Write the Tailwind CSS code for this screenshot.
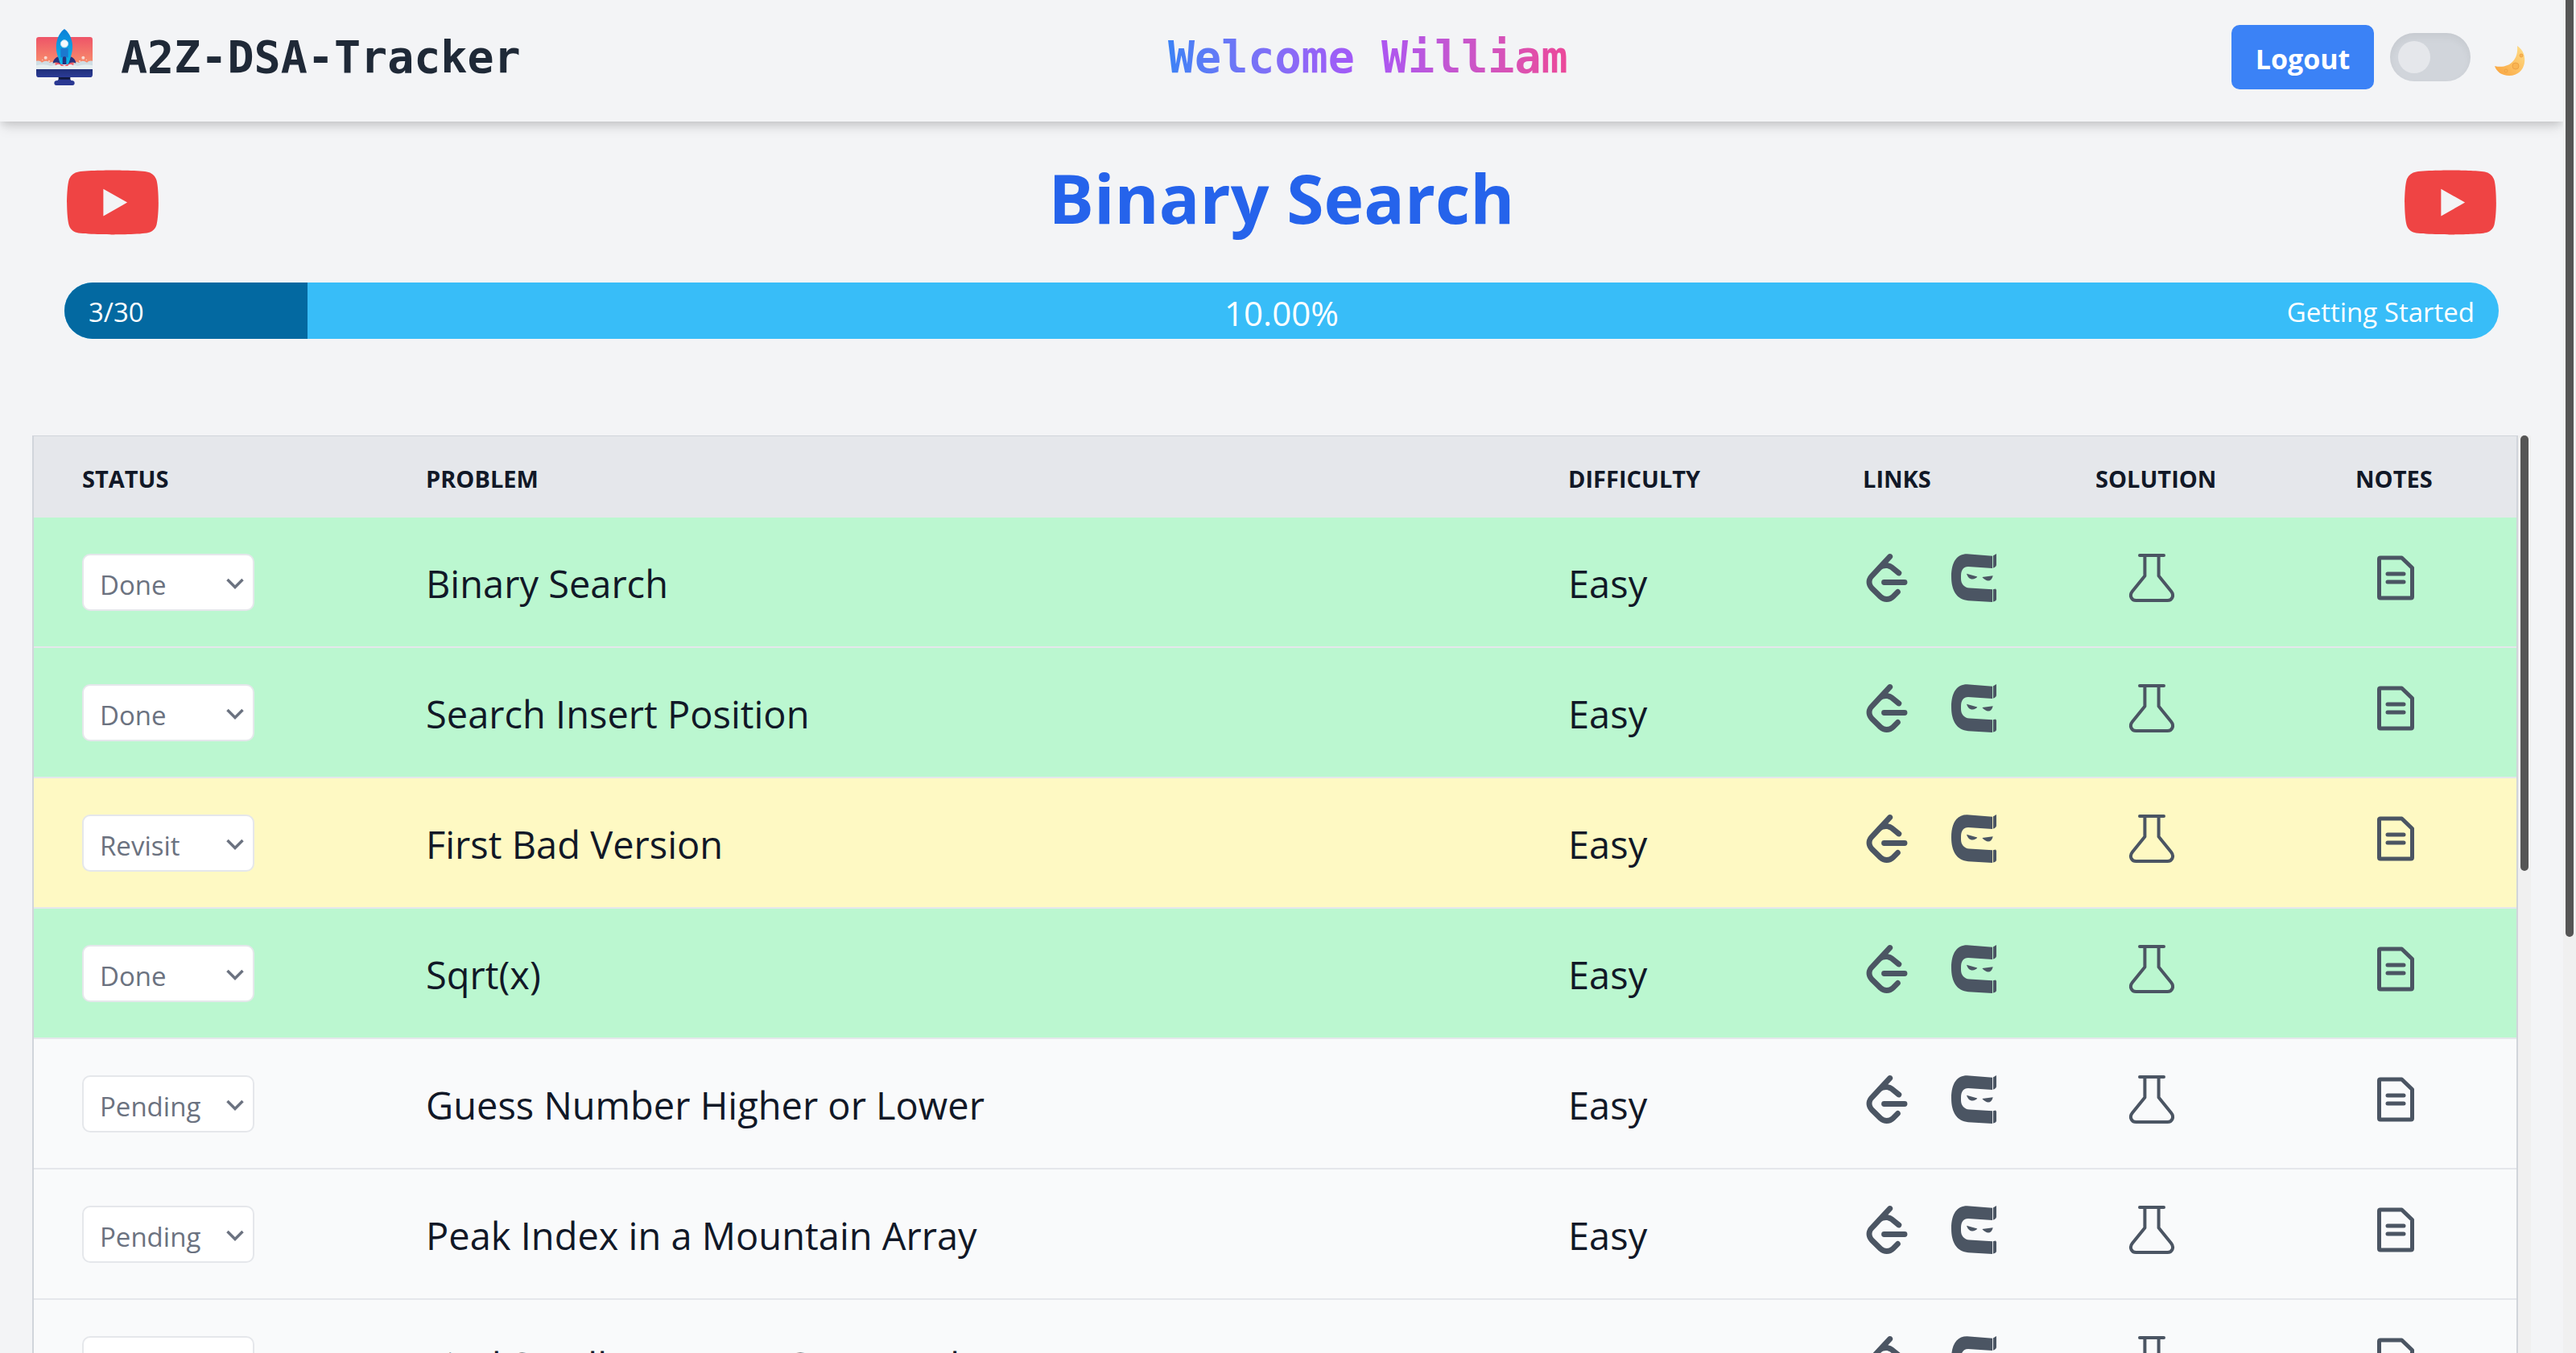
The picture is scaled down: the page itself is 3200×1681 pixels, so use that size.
<!DOCTYPE html>
<html lang="en">
<head>
<meta charset="utf-8">
<title>A2Z-DSA-Tracker</title>
<script src="https://cdn.jsdelivr.net/npm/@tailwindcss/browser@4"></script>
</head>
<body class="bg-[#f3f4f6] font-['Open_Sans',sans-serif] text-[#111827]">
<svg class="hidden" aria-hidden="true">
  <symbol id="youtube" viewBox="0 0 576 512"><path fill="currentColor" d="M549.655 124.083c-6.281-23.65-24.787-42.276-48.284-48.597C458.781 64 288 64 288 64S117.22 64 74.629 75.486c-23.497 6.322-42.003 24.947-48.284 48.597-11.412 42.867-11.412 132.305-11.412 132.305s0 89.438 11.412 132.305c6.281 23.65 24.787 41.5 48.284 47.821C117.22 448 288 448 288 448s170.78 0 213.371-11.486c23.497-6.321 42.003-24.171 48.284-47.821 11.412-42.867 11.412-132.305 11.412-132.305s0-89.438-11.412-132.305zm-317.51 213.508V175.185l142.739 81.205-142.739 81.201z"/></symbol>
  <symbol id="leetcode" viewBox="0 0 24 24"><path fill="currentColor" d="M13.483 0a1.374 1.374 0 0 0-.961.438L7.116 6.226l-3.854 4.126a5.266 5.266 0 0 0-1.209 2.104 5.35 5.35 0 0 0-.125.513 5.527 5.527 0 0 0 .062 2.362 5.83 5.83 0 0 0 .349 1.017 5.938 5.938 0 0 0 1.271 1.818l4.277 4.193.039.038c2.248 2.165 5.852 2.133 8.063-.074l2.396-2.392c.54-.54.54-1.414.003-1.955a1.378 1.378 0 0 0-1.951-.003l-2.396 2.392a3.021 3.021 0 0 1-4.205.038l-.02-.019-4.276-4.193c-.652-.64-.972-1.469-.948-2.263a2.68 2.68 0 0 1 .066-.523 2.545 2.545 0 0 1 .619-1.164L9.13 8.114c1.058-1.134 3.204-1.27 4.43-.278l3.501 2.831c.593.48 1.461.387 1.94-.207a1.384 1.384 0 0 0-.207-1.943l-3.5-2.831c-.8-.647-1.766-1.045-2.774-1.202l2.015-2.158A1.384 1.384 0 0 0 13.483 0zm-2.866 12.815a1.38 1.38 0 0 0-1.38 1.382 1.38 1.38 0 0 0 1.38 1.382H20.79a1.38 1.38 0 0 0 1.38-1.382 1.38 1.38 0 0 0-1.38-1.382z"/></symbol>
  <symbol id="ninja" viewBox="0 0 60 60"><g fill="currentColor"><path d="M21.500 0.300L53 2.700V18L23 16C17 16 14 20.500 14 27V31C14 37.500 18 42 24.500 42.500L53 44.300V60L23 58.200C9 57 2 46 2 28.500C2 10 9 0.300 21.500 0.300Z"/><path d="M53.900 2.600L58 0V13.500C58 15.500 56.500 17 53.900 17.700ZM53.900 44.200L57 43.500L58 45V56.500C58 58 56.500 59 53.900 59.700Z"/><path d="M21 24.700L34.300 28.600C32 32 24 34.500 21 24.700ZM40.300 29L53.700 27.200C52 35 46 35.500 40.300 29Z"/></g></symbol>
  <symbol id="flask" viewBox="0 0 60 60"><path fill="none" stroke="currentColor" stroke-width="4" stroke-linecap="round" stroke-linejoin="round" d="M15 2H45M21.400 2V27.500L6 46.500C1.500 52 5 58 10.500 58H49.500C55 58 58.500 52 54 46.500L38.600 27.500V2"/></symbol>
  <symbol id="doc" viewBox="0 0 60 60"><path fill="none" stroke="currentColor" stroke-width="5" stroke-linecap="round" stroke-linejoin="round" d="M11 5H37.500L50.500 17.500V53.500Q50.500 55 49 55H11Q9.500 55 9.500 53.500V6.500Q9.500 5 11 5ZM20 25H40M20 35H40"/></symbol>
  <symbol id="chevron" viewBox="0 0 24 16"><path fill="none" stroke="currentColor" stroke-width="3.500" d="M2.500 3L12 12.500L21.500 3"/></symbol>
</svg>

<div class="flex h-screen overflow-hidden">
  <div class="min-w-0 flex-1">
    <header class="flex h-[151px] items-start justify-between pt-[31px] pr-[42px] pl-[45px] shadow-[0_10px_15px_-3px_rgba(0,0,0,0.1),0_4px_10px_-1px_rgba(0,0,0,0.12)]">
      <a href="#" class="flex h-20 items-center gap-[35px]">
        <svg class="size-[70px]" viewBox="15 18 210 210" aria-hidden="true">
          <defs>
            <linearGradient id="sky" x1="0" y1="0" x2="0" y2="1"><stop offset="0" stop-color="#ee5468"/><stop offset="1" stop-color="#fa9a6c"/></linearGradient>
            <linearGradient id="base" x1="0" y1="0" x2="0" y2="1"><stop offset="0" stop-color="#20307a"/><stop offset="1" stop-color="#2b3b96"/></linearGradient>
            <linearGradient id="hull" x1="0" y1="0" x2="0" y2="1"><stop offset="0" stop-color="#0d80d8"/><stop offset="1" stop-color="#09b8ea"/></linearGradient>
          </defs>
          <path fill="url(#sky)" d="M15 168V58Q15 48 25 48H215Q225 48 225 58V168Z"/>
          <path fill="#cfdde3" d="M15 168V137Q30 134 36 143Q52 131 66 144Q76 136 90 152H150Q162 136 174 144Q188 131 204 143Q212 134 225 137V168Z"/>
          <path fill="#e6eef0" d="M15 168V154Q45 146 70 156Q120 140 170 156Q195 146 225 154V168Z"/>
          <g fill="#f8d9d2"><circle cx="50" cy="125" r="6"/><circle cx="190" cy="125" r="6"/><circle cx="63" cy="138" r="3"/><circle cx="177" cy="138" r="3"/><circle cx="38" cy="133" r="2"/><circle cx="202" cy="133" r="2"/></g>
          <path fill="#ee5b6c" d="M86 154Q84 140 102 144L120 156L138 144Q156 140 154 154Q140 144 132 156H108Q100 144 86 154Z"/>
          <path fill="#28307c" d="M97 121Q80 126 77 146Q93 138 106 149ZM143 121Q160 126 163 146Q147 138 134 149Z"/>
          <path fill="url(#hull)" d="M120 18C95 36 80 78 97 124Q101 140 106 149H134Q139 140 143 124C160 78 145 36 120 18Z"/>
          <path fill="#1b79cf" d="M106 90H134V124H106Z"/>
          <circle cx="120" cy="73" r="14" fill="#f4f9fc" stroke="#a9d8f1" stroke-width="3"/>
          <path fill="#28307c" d="M113 150V128Q113 121 120 121Q127 121 127 128V150Z"/>
          <path fill="url(#base)" d="M15 168H225V188Q225 198 215 198H25Q15 198 15 188Z"/>
          <path fill="#10193f" d="M98 198H142V212H98Z"/>
          <path fill="#2a3892" d="M98 206H142Q144 211 152 211Q158 213 158 219Q158 228 150 228H90Q82 228 82 219Q82 213 88 211Q96 211 98 206Z"/>
        </svg>
        <span class="font-['DejaVu_Sans_Mono',monospace] text-[55px] leading-[60px] font-bold text-[#1f2937]">A2Z-DSA-Tracker</span>
      </a>
      <div class="mr-5 flex h-20 items-center">
        <span class="bg-linear-to-r from-[#3b82f6] via-[#a855f7] to-[#ec4899] bg-clip-text font-['DejaVu_Sans_Mono',monospace] text-[55px] leading-[60px] font-bold text-transparent">Welcome William</span>
      </div>
      <div class="flex h-20 items-center">
        <button class="h-20 w-[177px] rounded-[10px] bg-[#3b82f6] pt-1 text-[34px] font-bold text-white">Logout</button>
        <label class="ml-5 flex items-center gap-[30px]">
          <span class="relative flex h-[60px] w-[100px] items-center rounded-full bg-[#d1d5db] px-[10px] shadow-[inset_0_5px_10px_0_rgba(0,0,0,0.05)]">
            <input type="checkbox" aria-label="Dark mode" class="peer absolute inset-0 appearance-none">
            <span class="size-10 rounded-full bg-[#e5e7eb]"></span>
          </span>
          <svg class="mt-2 size-[43px]" viewBox="0 0 43 43" aria-hidden="true">
            <defs><linearGradient id="moon" x1="1" y1="0" x2="0" y2="1"><stop offset="0" stop-color="#ffdf8a"/><stop offset="1" stop-color="#f9a23c"/></linearGradient></defs>
            <path fill="url(#moon)" d="M28 3C43 12 40 40 18 40C9 40 2 35 0 28C16 32 30 22 28 3Z"/>
            <g fill="#f9b452" stroke="#eda244"><circle cx="26" cy="28" r="4"/><circle cx="14" cy="34" r="2"/><circle cx="33" cy="15" r="2"/></g>
          </svg>
        </label>
      </div>
    </header>

    <main class="px-10 pt-[47px]">
      <div class="flex h-[107px] items-center justify-between px-10">
        <a href="#" aria-label="Watch on YouTube"><svg class="h-[107px] w-[120px] text-[#ef4444]"><use href="#youtube"/></svg></a>
        <h1 class="pb-3 text-[84px] leading-[100px] font-bold text-[#2563eb]">Binary Search</h1>
        <a href="#" aria-label="Watch on YouTube"><svg class="h-[107px] w-[120px] text-[#ef4444]"><use href="#youtube"/></svg></a>
      </div>

      <div class="px-10 pt-[46px]">
        <div class="relative flex h-[70px] items-center justify-between overflow-hidden rounded-full bg-[#38bdf8] px-[30px] pt-1 text-[33px] text-white">
          <div class="absolute inset-y-0 left-0 bg-[#0369a1]" style="width:10%"></div>
          <span class="relative flex-1">3/30</span>
          <span class="relative text-[42px]">10.00%</span>
          <span class="relative flex-1 text-right">Getting Started</span>
        </div>
      </div>

      <div class="mt-[120px] flex h-[1500px] overflow-hidden">
        <div class="min-w-0 flex-1">
          <table class="w-full table-fixed border-separate border-spacing-0 border-x-2 border-t border-[#d1d5db] text-left">
            <thead class="bg-[#e5e7eb] text-[29px] leading-10 uppercase">
              <tr class="h-[101px]">
                <th class="w-[427px] px-[60px] pt-1">Status</th>
                <th class="px-[60px] pt-1">Problem</th>
                <th class="w-[366px] px-[60px] pt-1">Difficulty</th>
                <th class="w-[289px] px-[60px] pt-1">Links</th>
                <th class="w-[323px] px-[60px] pt-1">Solution</th>
                <th class="w-[260px] px-[60px] pt-1">Notes</th>
              </tr>
            </thead>
            <tbody id="rows" class="align-top text-[47px] leading-[74px]"></tbody>
          </table>
        </div>
        <div class="w-4 bg-[#f0f0f0] px-[3px]"><div class="h-[541px] rounded-full bg-[#555]"></div></div>
      </div>
    </main>
  </div>
  <div class="w-4 bg-[#f0f0f0] px-[3px]"><div class="rounded-b-full bg-[#555]" style="height:69.25%"></div></div>
</div>

<script>
const problems = [
  ['Binary Search', 'Done'],
  ['Search Insert Position', 'Done'],
  ['First Bad Version', 'Revisit'],
  ['Sqrt(x)', 'Done'],
  ['Guess Number Higher or Lower', 'Pending'],
  ['Peak Index in a Mountain Array', 'Pending'],
  ['Find Smallest Letter Greater Than Target', 'Pending'],
];
const colors = { Done: 'bg-[#bbf7d0]', Revisit: 'bg-[#fef9c3]', Pending: 'bg-[#f9fafb]' };
const icon = (id, label) => `<a href="#" aria-label="${label}" class="block size-[60px]"><svg class="size-[60px]"><use href="#${id}"/></svg></a>`;
document.getElementById('rows').innerHTML = problems.map(([name, status]) => `
  <tr class="h-[162px] ${colors[status]}">
    <td class="border-b-2 border-[#e5e7eb] pt-[45px] pl-[60px]">
      <div class="relative h-[71px] w-[214px]">
        <select aria-label="Status of ${name}" class="block h-[71px] w-[214px] appearance-none rounded-[10px] border-2 border-[#e5e7eb] bg-white pb-1 pl-5 text-[33px] text-[#6b7280]">
          ${['Pending', 'Done', 'Revisit'].map(s => `<option${s === status ? ' selected' : ''}>${s}</option>`).join('')}
        </select>
        <svg class="pointer-events-none absolute top-[29px] right-3 h-4 w-6 text-[#6b7280]"><use href="#chevron"/></svg>
      </div>
    </td>
    <td class="truncate border-b-2 border-[#e5e7eb] px-[60px] pt-[45px]">${name}</td>
    <td class="border-b-2 border-[#e5e7eb] px-[60px] pt-[45px]">Easy</td>
    <td class="border-b-2 border-[#e5e7eb] pt-[45px] pl-[60px] text-[#4b5563]"><div class="flex gap-12">${icon('leetcode', 'LeetCode')}${icon('ninja', 'Coding Ninjas')}</div></td>
    <td class="border-b-2 border-[#e5e7eb] pt-[45px] pl-[100px] text-[#4b5563]">${icon('flask', 'Solution')}</td>
    <td class="border-b-2 border-[#e5e7eb] pt-[45px] pl-20 text-[#4b5563]">${icon('doc', 'Notes')}</td>
  </tr>`).join('');
</script>
</body>
</html>
